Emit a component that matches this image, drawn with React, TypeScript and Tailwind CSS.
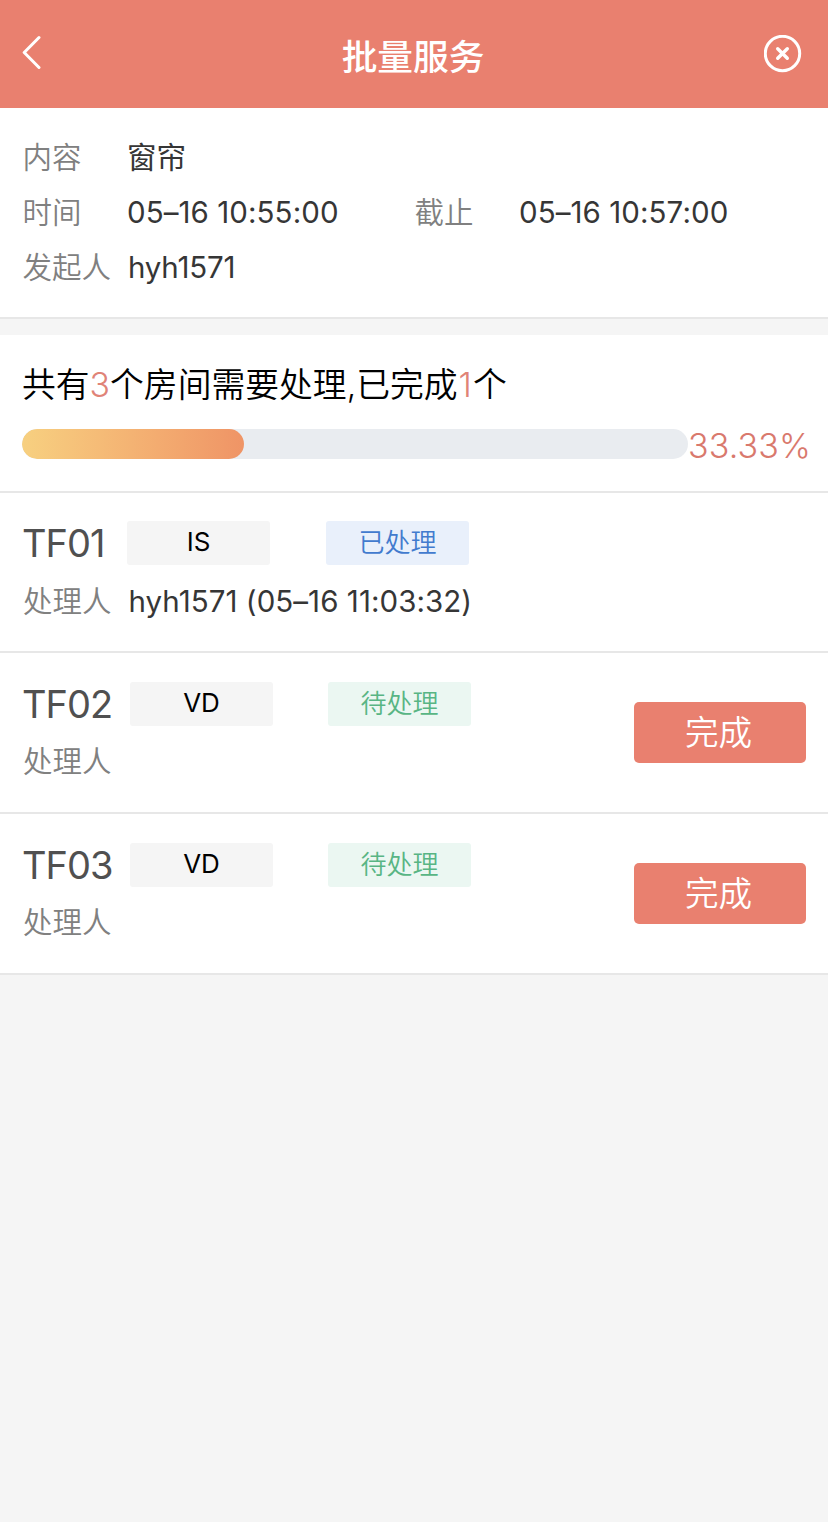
import type { ReactNode } from 'react';

const fontStack = "font-['Inter','Noto_Sans_CJK_SC',sans-serif]";

function Field({ label, children }: { label: string; children?: ReactNode }) {
  return (
    <div className="flex h-[55px] items-center text-[29.5px] leading-[55px] whitespace-nowrap">
      <span className="w-[104.5px] shrink-0 font-[350] text-[#808080]">{label}</span>
      <span className="font-[380] text-[#363636]">{children}</span>
    </div>
  );
}

type Room = {
  name: string;
  nameClass: string;
  status: string;
  gapClass: string;
  done: boolean;
  handler?: string;
  rowClass: string;
  handlerClass: string;
};

const rooms: Room[] = [
  {
    name: 'TF01',
    nameClass: 'w-[104px]',
    status: 'IS',
    gapClass: 'ml-14',
    done: true,
    handler: 'hyh1571 (05–16 11:03:32)',
    rowClass: 'h-[160px] pt-[28px]',
    handlerClass: 'pt-[9px]',
  },
  {
    name: 'TF02',
    nameClass: 'w-[107px]',
    status: 'VD',
    gapClass: 'ml-[55px]',
    done: false,
    rowClass: 'h-[161px] pt-[29px]',
    handlerClass: 'pt-[8px]',
  },
  {
    name: 'TF03',
    nameClass: 'w-[107px]',
    status: 'VD',
    gapClass: 'ml-[55px]',
    done: false,
    rowClass: 'h-[161px] pt-[29px]',
    handlerClass: 'pt-[8px]',
  },
];

function RoomRow({ room }: { room: Room }) {
  return (
    <li className={`flex items-start justify-between border-b-2 border-[#e7e7e7] bg-white pr-[22px] pl-[23px] ${room.rowClass}`}>
      <div>
        <div className="flex h-[44px] items-center">
          <span className={`-ml-px shrink-0 text-[38px] leading-[44px] font-[380] tracking-[-1px] text-[#505050] ${room.nameClass}`}>
            {room.name}
          </span>
          <span className="ml-px h-[44px] w-[143px] rounded-[3px] bg-[#f5f5f5] text-center text-[26px] leading-[42px] font-[380] text-black">
            {room.status}
          </span>
          <span
            className={`h-[44px] w-[143px] rounded-[3px] text-center text-[26px] leading-[44px] font-[350] ${room.gapClass} ${
              room.done ? 'bg-[#e9f0fb] text-[#427bce]' : 'bg-[#ebf7f2] text-[#58b584]'
            }`}
          >
            {room.done ? '已处理' : '待处理'}
          </span>
        </div>
        <div className={room.handlerClass}>
          <Field label="处理人">
            <span className="pl-px tracking-[0.05px]">{room.handler}</span>
          </Field>
        </div>
      </div>
      {!room.done && (
        <button className="mt-[20px] h-[61px] w-[172px] rounded-[5px] bg-[#e9806f] pr-[3px] text-[33.6px] leading-[61px] font-[350] text-white">
          完成
        </button>
      )}
    </li>
  );
}

export default function App() {
  return (
    <div className={`min-h-[1522px] w-full bg-[#f5f5f5] ${fontStack}`}>
      <header className="flex h-[108px] items-center justify-between bg-[#e9806f] pr-[26px] pl-[21px] text-white">
        <button aria-label="返回" className="w-[41px] pb-0.5">
          <svg width="20" height="36" viewBox="0 0 20 36" fill="none" stroke="currentColor" strokeWidth="3" strokeLinecap="round" strokeLinejoin="round">
            <path d="M18 2.500L3.200 17.500L18 32.500" />
          </svg>
        </button>
        <h1 className="pt-[6px] text-[35.7px] leading-[50px] font-medium">批量服务</h1>
        <button aria-label="关闭" className="pb-px">
          <svg width="38" height="38" viewBox="0 0 38 38" fill="none" stroke="currentColor">
            <circle cx="18.500" cy="18.500" r="17.200" strokeWidth="3" />
            <path d="M13.700 13.700L23.300 23.300M23.300 13.700L13.700 23.300" strokeWidth="3.400" strokeLinecap="round" />
          </svg>
        </button>
      </header>

      <section className="mb-4 h-[211px] border-b-2 border-[#e7e7e7] bg-white pt-[22px] pl-[22.5px]">
        <Field label="内容">窗帘</Field>
        <div className="flex">
          <div className="w-[392px]">
            <Field label="时间">
              <span className="tracking-[0.07px]">05–16 10:55:00</span>
            </Field>
          </div>
          <Field label="截止">
            <span className="tracking-[0.07px]">05–16 10:57:00</span>
          </Field>
        </div>
        <Field label="发起人">
          <span className="pl-px tracking-[-0.2px]">hyh1571</span>
        </Field>
      </section>

      <section className="h-[158px] border-b-2 border-[#e7e7e7] bg-white pt-[25px] pl-[22px]">
        <p className="text-[33.8px] leading-[50px] font-[350] whitespace-nowrap text-black">
          共有<span className="font-light text-[#e08377]">3</span>个房间需要处理,已完成
          <span className="px-px font-light text-[#e08377]">1</span>个
        </p>
        <div className="mt-[14px] flex h-[40px] items-center">
          <div className="h-[30px] w-[666px] shrink-0 overflow-hidden rounded-full bg-[#e9ecf0]">
            <div className="h-full w-1/3 rounded-full bg-linear-to-r from-[#f7d080] to-[#ef9466]" />
          </div>
          <span className="pt-[3px] text-[34px] leading-[40px] font-light tracking-[0.15px] text-[#d9796d]">33.33%</span>
        </div>
      </section>

      <ul>
        {rooms.map((room) => (
          <RoomRow key={room.name} room={room} />
        ))}
      </ul>
    </div>
  );
}
